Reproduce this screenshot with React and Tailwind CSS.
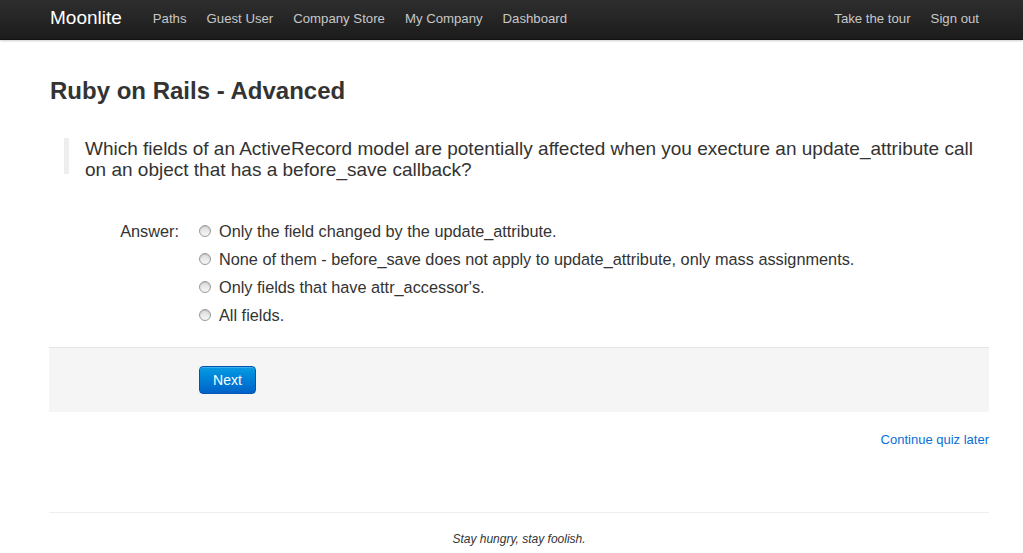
import React from 'react'

const answers = [
  'Only the field changed by the update_attribute.',
  'None of them - before_save does not apply to update_attribute, only mass assignments.',
  "Only fields that have attr_accessor's.",
  'All fields.',
]

function Radio() {
  return (
    <span className="inline-block h-[12px] w-[12px] shrink-0 rounded-full border border-[#9a9a9a] bg-gradient-to-b from-[#dcdcdc] to-[#f6f6f6] shadow-[inset_0_1px_1px_rgba(0,0,0,0.15)]"></span>
  )
}

export default function App() {
  const links = ['Paths', 'Guest User', 'Company Store', 'My Company', 'Dashboard']
  return (
    <div className="min-h-screen bg-white text-[#333] font-['Liberation_Sans',Arial,sans-serif]">
      <div className="h-[40px] bg-gradient-to-b from-[#2e2e2e] to-[#1c1c1c] border-b border-[#111] shadow-[0_1px_2px_rgba(0,0,0,0.2)]">
        <div className="ml-[49px] flex h-full w-[940px] items-center pb-[2px]">
          <span className="text-[19px] text-white mr-[31px] ml-[1px]">Moonlite</span>
          <nav className="flex items-center gap-[20px] text-[13.2px] text-[#c8c8c8]">
            {links.map(l => <span key={l}>{l}</span>)}
          </nav>
          <div className="ml-auto flex items-center gap-[20px] text-[13.2px] text-[#c8c8c8] mr-[10px]">
            <span>Take the tour</span>
            <span>Sign out</span>
          </div>
        </div>
      </div>

      <main className="ml-[49px] w-[940px] pt-[36px]">
        <h2 className="text-[24px] font-bold leading-[30px] ml-[1px]">Ruby on Rails - Advanced</h2>

        <blockquote className="mt-[32px] ml-[15px] h-[36px] border-l-[5px] border-[#eeeeee] pl-[16px] text-[19px] leading-[21px]">
          Which fields of an ActiveRecord model are potentially affected when you execture an update_attribute call on an object that has a before_save callback?
        </blockquote>

        <div className="mt-[43px] flex">
          <div className="w-[130px] text-right text-[16.3px] leading-[28px]">Answer:</div>
          <div className="ml-[20px] flex flex-col">
            {answers.map(a => (
              <label key={a} className="flex h-[28px] items-center gap-[8px] text-[16.3px]">
                <Radio />
                <span>{a}</span>
              </label>
            ))}
          </div>
        </div>

        <div className="mt-[18px] border-t border-[#e5e5e5] bg-[#f5f5f5] pt-[18px] pb-[18px] pl-[150px]">
          <button className="h-[28px] w-[57px] rounded-[4px] border border-[#0055b3] bg-gradient-to-b from-[#0a9be3] to-[#0062c9] text-[14px] text-white shadow-[inset_0_1px_0_rgba(255,255,255,0.2)]">Next</button>
        </div>

        <div className="mt-[18px] text-right text-[13px] leading-[20px] text-[#0a6fd6]">Continue quiz later</div>

        <hr className="mt-[62px] border-t border-[#eeeeee]" />
        <p className="pt-[18px] text-center text-[12px] italic leading-[16px]">Stay hungry, stay foolish.</p>
      </main>
    </div>
  )
}
